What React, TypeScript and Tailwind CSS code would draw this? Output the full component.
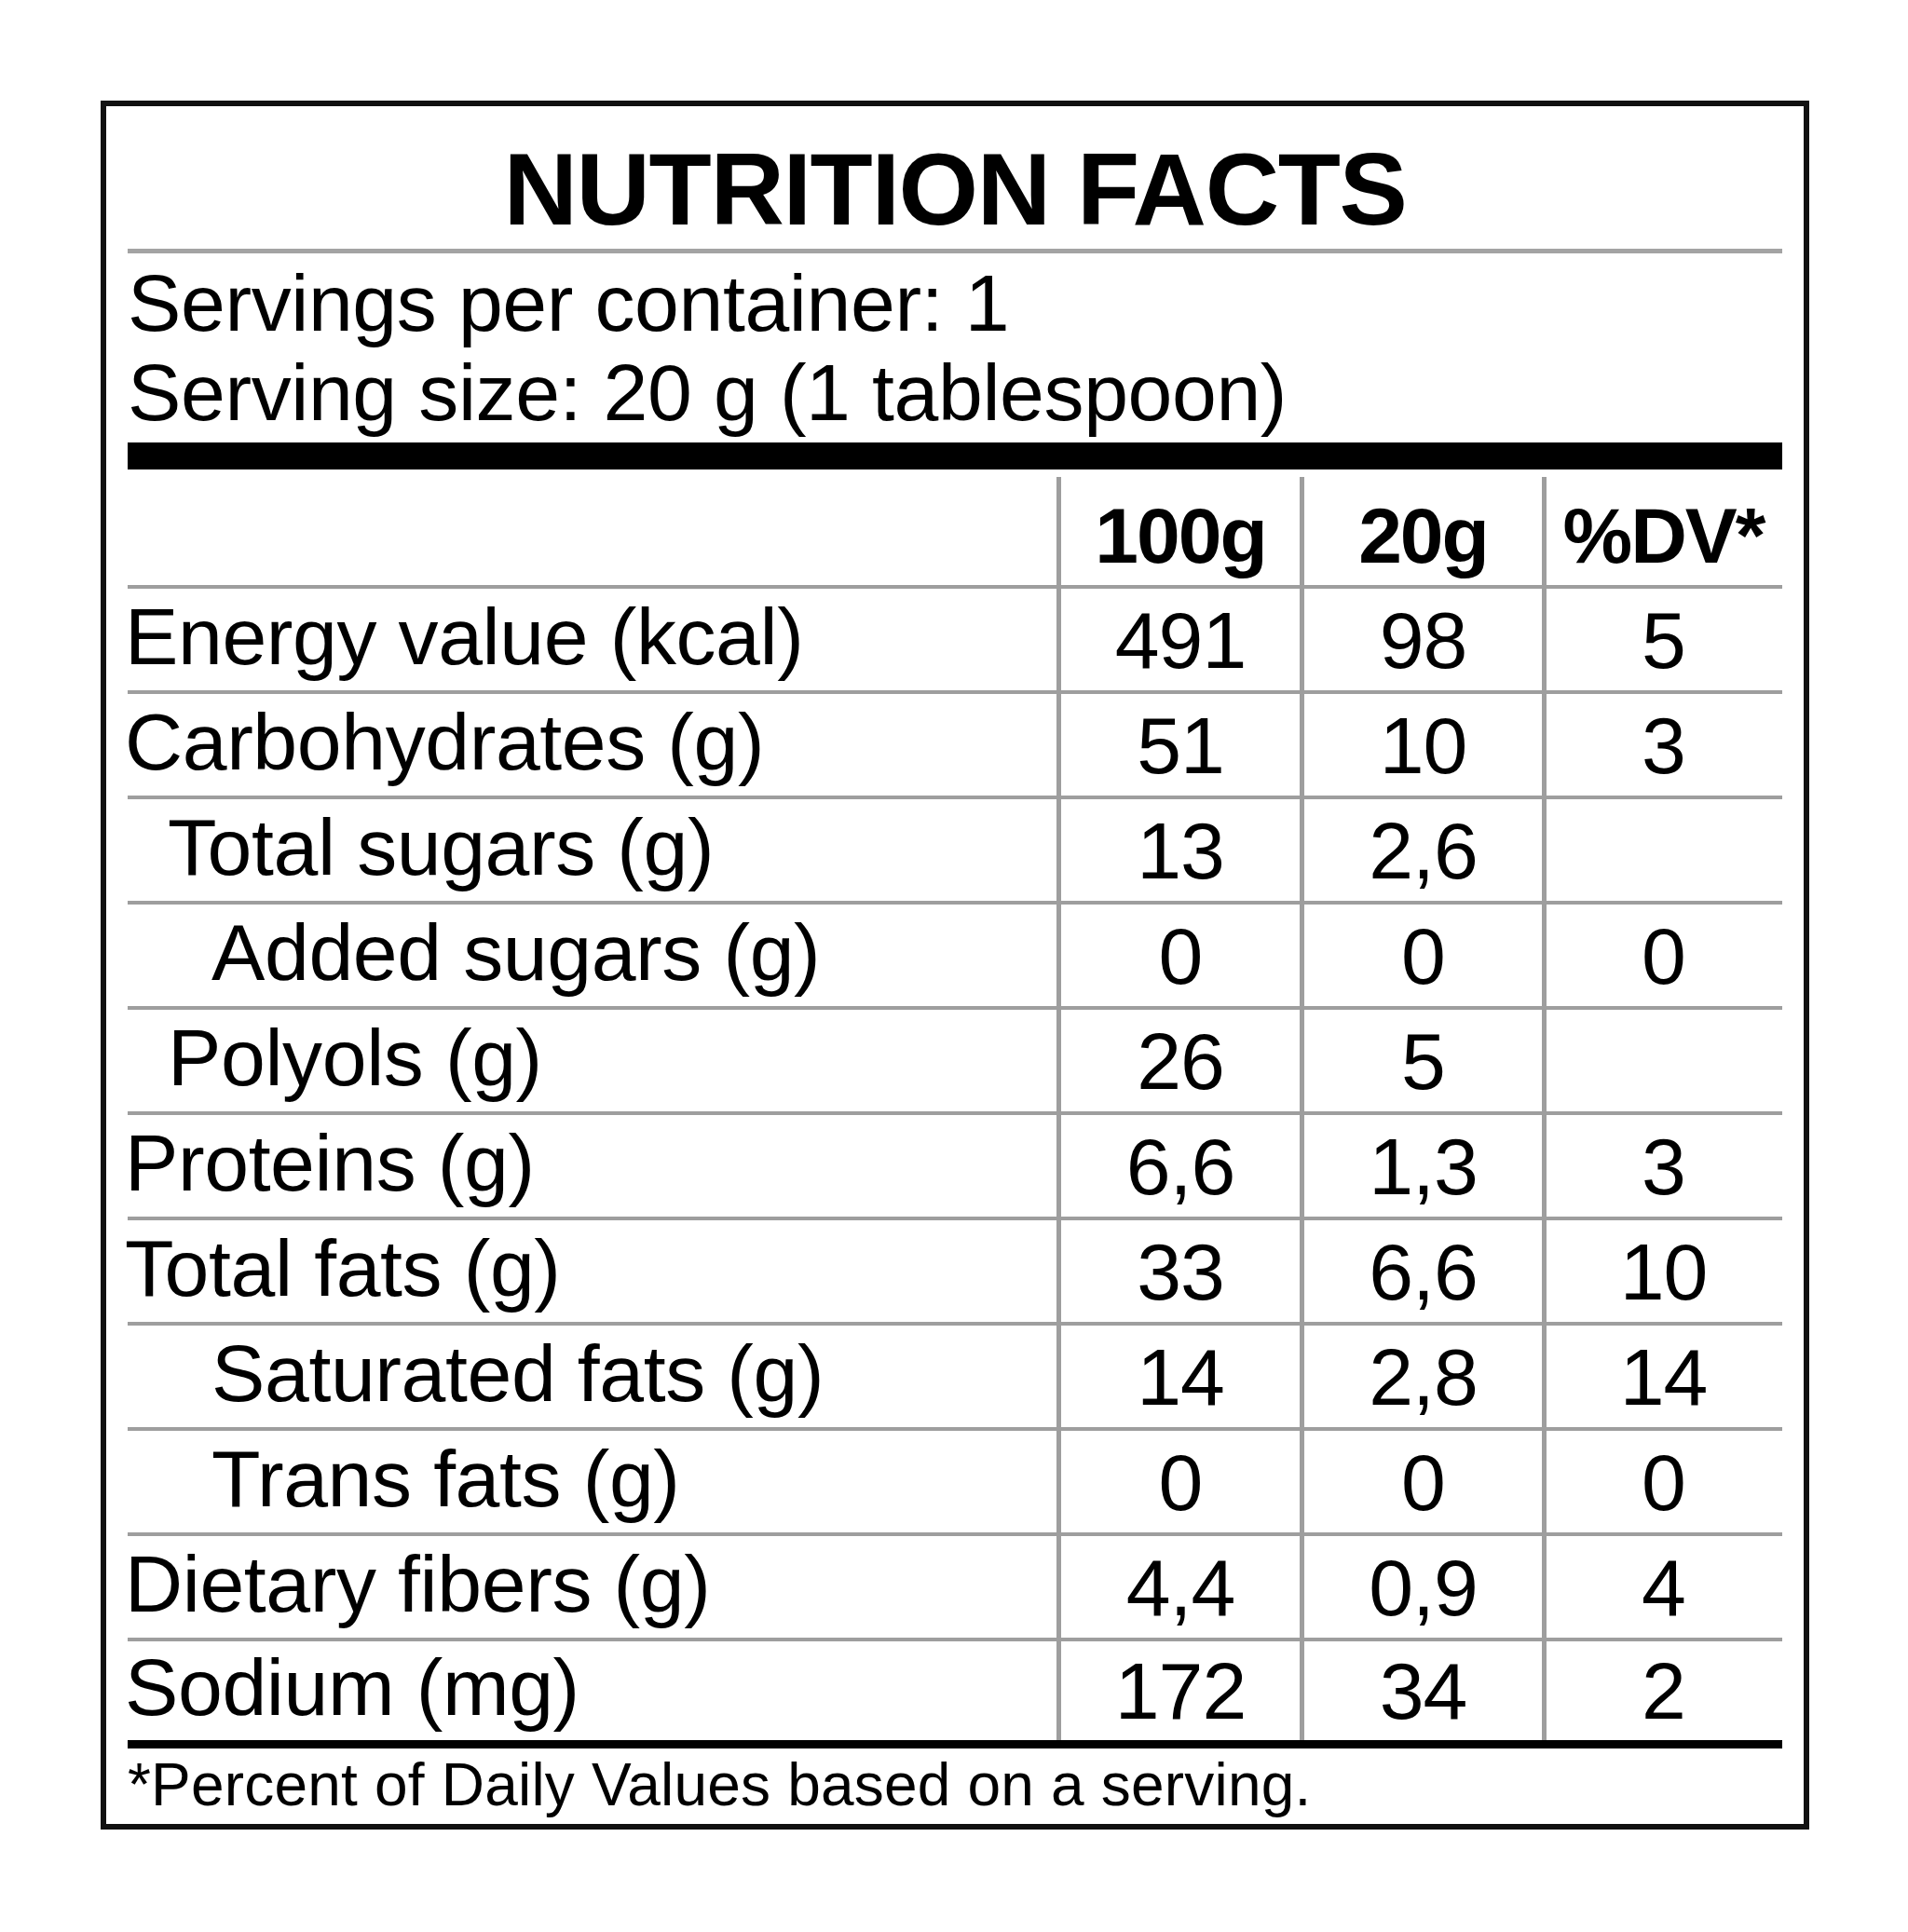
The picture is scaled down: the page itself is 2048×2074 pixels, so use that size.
import React from "react";

type Row = { label: string; indent: 0 | 1 | 2; a: string; b: string; c: string };

const rows: Row[] = [
  { label: "Energy value (kcal)", indent: 0, a: "491", b: "98", c: "5" },
  { label: "Carbohydrates (g)", indent: 0, a: "51", b: "10", c: "3" },
  { label: "Total sugars (g)", indent: 1, a: "13", b: "2,6", c: "" },
  { label: "Added sugars (g)", indent: 2, a: "0", b: "0", c: "0" },
  { label: "Polyols (g)", indent: 1, a: "26", b: "5", c: "" },
  { label: "Proteins (g)", indent: 0, a: "6,6", b: "1,3", c: "3" },
  { label: "Total fats (g)", indent: 0, a: "33", b: "6,6", c: "10" },
  { label: "Saturated fats (g)", indent: 2, a: "14", b: "2,8", c: "14" },
  { label: "Trans fats (g)", indent: 2, a: "0", b: "0", c: "0" },
  { label: "Dietary fibers (g)", indent: 0, a: "4,4", b: "0,9", c: "4" },
  { label: "Sodium (mg)", indent: 0, a: "172", b: "34", c: "2" },
];

const indentClass = ["pl-0", "pl-[46px]", "pl-[93px]"];

export default function App() {
  return (
    <div
      className="min-h-[2074px] w-[2048px] bg-white pt-[108px] pl-[108px] text-black"
      style={{ fontFamily: '"Liberation Sans", Arial, Helvetica, sans-serif' }}
    >
      <div className="flex h-[1856px] w-[1834px] flex-col border-[6px] border-[#111] px-[23px]">
        {/* Title */}
        <div className="flex h-[153px] items-center justify-center pt-[25px]">
          <h1 className="text-[110px] font-bold leading-none tracking-[-1.4px]">NUTRITION FACTS</h1>
        </div>
        <div className="h-[5px] bg-[#a3a3a3]" />

        {/* Servings */}
        <div className="mb-[6px] pt-[5px] text-[86px] leading-[96px] tracking-[-0.4px]">
          <div>Servings per container: 1</div>
          <div>Serving size: 20 g (1 tablespoon)</div>
        </div>
        <div className="h-[29px] bg-black" />

        {/* Header row */}
        <div className="grid h-[128px] grid-cols-[997px_261px_260px_256px] border-b-4 border-[#9e9e9e]">
          <div />
          {["100g", "20g", "%DV*"].map((h) => (
            <div
              key={h}
              className="mt-[8px] flex items-center justify-center border-l-[5px] border-[#9e9e9e] pt-[10px] text-[84px] font-bold leading-none tracking-[-2px]"
            >
              {h}
            </div>
          ))}
        </div>

        {/* Data rows */}
        {rows.map((r, i) => {
          const last = i === rows.length - 1;
          return (
            <div
              key={r.label}
              className={
                last
                  ? "grid h-[106px] grid-cols-[997px_261px_260px_256px]"
                  : "grid h-[113px] grid-cols-[997px_261px_260px_256px] border-b-4 border-[#9e9e9e]"
              }
            >
              <div
                className={`-ml-[3px] flex items-center pb-[8px] text-[86px] leading-none tracking-[-0.4px] whitespace-nowrap ${indentClass[r.indent]}`}
              >
                {r.label}
              </div>
              {[r.a, r.b, r.c].map((v, j) => (
                <div
                  key={j}
                  className="flex items-center justify-center border-l-[5px] border-[#9e9e9e] text-[86px] leading-none tracking-[-1px]"
                >
                  {v}
                </div>
              ))}
            </div>
          );
        })}

        <div className="h-[9px] bg-black" />

        {/* Footer */}
        <div className="flex h-[81px] items-center pb-[3px] text-[64px] leading-none tracking-[0.2px]">
          *Percent of Daily Values based on a serving.
        </div>
      </div>
    </div>
  );
}
